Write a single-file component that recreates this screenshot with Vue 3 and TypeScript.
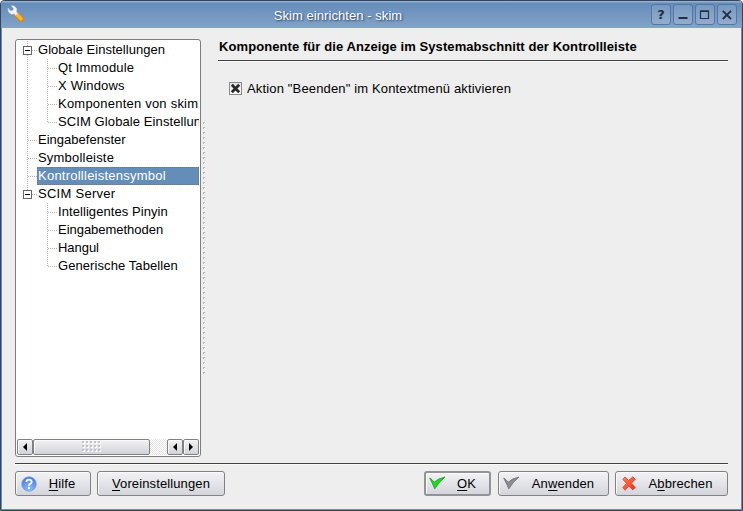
<script setup lang="ts">
import { ref } from 'vue'

interface TreeRow {
  label: string
  depth: 0 | 1
  tracking: number
  expandable?: boolean
  last?: boolean
}

const rows: TreeRow[] = [
  { label: 'Globale Einstellungen', depth: 0, tracking: 0.02, expandable: true },
  { label: 'Qt Immodule', depth: 1, tracking: 0.16 },
  { label: 'X Windows', depth: 1, tracking: 0.2 },
  { label: 'Komponenten von skim', depth: 1, tracking: 0.22 },
  { label: 'SCIM Globale Einstellungen', depth: 1, tracking: 0.1, last: true },
  { label: 'Eingabefenster', depth: 0, tracking: 0.01 },
  { label: 'Symbolleiste', depth: 0, tracking: 0.2 },
  { label: 'Kontrollleistensymbol', depth: 0, tracking: 0.24 },
  { label: 'SCIM Server', depth: 0, tracking: 0.28, expandable: true, last: true },
  { label: 'Intelligentes Pinyin', depth: 1, tracking: 0.07 },
  { label: 'Eingabemethoden', depth: 1, tracking: -0.03 },
  { label: 'Hangul', depth: 1, tracking: -0.05 },
  { label: 'Generische Tabellen', depth: 1, tracking: 0.08, last: true },
]
const lastRootIndex = 8
const selected = ref(7)
const quitEnabled = ref(true)
</script>

<template>
  <div class="window">
    <header class="titlebar">
      <svg class="app-icon" width="18" height="18" viewBox="0 0 18 18">
        <path d="M9.4 9.4 14 14.2" stroke="#d98512" stroke-width="5.4" stroke-linecap="round" />
        <path d="M9.6 9.2 14 13.8" stroke="#ffb52c" stroke-width="3.6" stroke-linecap="round" />
        <path d="M1 3.2 1.4 6.8 4.2 9.2 7.2 8.8 8.8 10.4 10.6 8.6 9.4 6.8 9.6 3.4 7 1 4.3 .8 6.6 3.4 6 5.6 3.6 6z" fill="#f4f4fc" stroke="#d4d6ec" stroke-width=".6" />
      </svg>
      <h1 class="title">Skim einrichten - skim</h1>
      <nav class="controls">
        <button class="control" aria-label="Hilfe"><span class="question">?</span></button>
        <button class="control" aria-label="Minimieren">
          <svg width="18" height="19"><path d="M4.5 13h9" stroke="#20313f" stroke-width="2" /></svg>
        </button>
        <button class="control" aria-label="Maximieren">
          <svg width="18" height="19"><path d="M4 6.5h9M4.5 6v8M12.5 6v8M4 13.5h9M4 5.8h9" fill="none" stroke="#20313f" stroke-width="1.2" /></svg>
        </button>
        <button class="control" aria-label="Schließen">
          <svg width="18" height="19"><path d="M4.8 5.8 13 14M13 5.8 4.8 14" stroke="#20313f" stroke-width="1.8" /></svg>
        </button>
      </nav>
    </header>

    <div class="content">
      <div class="main">
        <aside class="tree">
          <ul class="rows">
            <li
              v-for="(row, i) in rows"
              :key="row.label"
              class="row"
              :class="{ selected: i === selected }"
              @click="selected = i"
            >
              <svg class="guides" :width="row.depth ? 40 : 20" height="18">
                <g class="dots">
                  <path v-if="i <= lastRootIndex" :d="row.depth === 0 && i === lastRootIndex ? 'M10.5 0V9' : 'M10.5 0V18'" />
                  <path v-if="row.depth === 0" d="M11 9.5H20" />
                  <path v-if="row.depth === 1" :d="row.last ? 'M30.5 0V9' : 'M30.5 0V18'" />
                  <path v-if="row.depth === 1" d="M31 9.5H40" />
                </g>
                <g v-if="row.expandable">
                  <rect x="6.5" y="5.5" width="8" height="8" fill="#fff" stroke="#666" />
                  <path d="M8 9.5h5" stroke="#000" />
                </g>
              </svg>
              <span class="label" :style="{ letterSpacing: row.tracking + 'px' }">{{ row.label }}</span>
            </li>
          </ul>
          <div class="scrollbar">
            <button class="arrow" aria-label="Links"><svg width="14" height="14"><path d="M9 3v8L5 7z" /></svg></button>
            <div class="thumb">
              <svg width="20" height="12">
                <g v-for="y in 3" :key="y">
                  <g v-for="x in 5" :key="x">
                    <rect :x="x * 4 - 3" :y="y * 4 - 3" width="2" height="2" fill="#fff" />
                    <rect :x="x * 4 - 4" :y="y * 4 - 4" width="2" height="2" fill="#c2c2c7" />
                  </g>
                </g>
              </svg>
            </div>
            <div class="track"></div>
            <button class="arrow" aria-label="Links"><svg width="14" height="14"><path d="M9 3v8L5 7z" /></svg></button>
            <button class="arrow" aria-label="Rechts"><svg width="14" height="14"><path d="M5 3v8l4-4z" /></svg></button>
          </div>
        </aside>
        <div class="splitter"></div>
        <section class="page">
          <h2 class="heading">Komponente für die Anzeige im Systemabschnitt der Kontrollleiste</h2>
          <label class="option">
            <input v-model="quitEnabled" class="native" type="checkbox" />
            <span class="box">
              <svg v-if="quitEnabled" width="11" height="11"><path d="M1.8 1.8 9.2 9.2M9.2 1.8 1.8 9.2" stroke="#2a2a2a" stroke-width="2.8" /></svg>
            </span>
            <span class="option-label">Aktion "Beenden" im Kontextmenü aktivieren</span>
          </label>
        </section>
      </div>

      <footer class="footer">
        <button class="btn help">
          <svg class="icon" width="16" height="16">
            <defs>
              <radialGradient id="ball" cx=".5" cy=".8" r=".75">
                <stop offset="0" stop-color="#8fc0ff" />
                <stop offset="1" stop-color="#4478e8" />
              </radialGradient>
            </defs>
            <circle cx="8" cy="8" r="7.3" fill="url(#ball)" stroke="#7fa2ea" stroke-width=".7" />
            <path d="M5.4 6Q5.5 3.6 8 3.6T10.7 5.9Q10.6 7.2 9.2 7.9 8 8.5 8 9.7" fill="none" stroke="#fff" stroke-width="1.8" />
            <circle cx="8" cy="12" r="1.15" fill="#fff" />
          </svg>
          <span class="caption"><u>H</u>ilfe</span>
        </button>
        <button class="btn defaults"><span class="caption"><u>V</u>oreinstellungen</span></button>
        <span class="spacer"></span>
        <button class="btn ok">
          <svg class="icon check" width="17" height="14">
            <path d="M.7 2Q3 3.4 5.2 6.2 9 2.5 16 1 10 5.8 5.8 12.8 3 6.5 .7 2z" fill="#1ddb1d" stroke="#1a9c1a" stroke-width=".8" />
          </svg>
          <span class="caption"><u>O</u>K</span>
        </button>
        <button class="btn apply">
          <svg class="icon check" width="17" height="14">
            <path d="M.7 2Q3 3.4 5.2 6.2 9 2.5 16 1 10 5.8 5.8 12.8 3 6.5 .7 2z" fill="#8c8c91" stroke="#6c6c71" stroke-width=".8" />
          </svg>
          <span class="caption">An<u>w</u>enden</span>
        </button>
        <button class="btn cancel">
          <svg class="icon" width="14" height="15">
            <defs>
              <linearGradient id="cross" x1="0" y1="0" x2="1" y2="1">
                <stop offset="0" stop-color="#ff8a60" />
                <stop offset="1" stop-color="#f8240c" />
              </linearGradient>
            </defs>
            <path d="M.8 3.3 3.2 1 6.6 4.6 10.9.8 13.3 3.2 9.3 7.2 13.2 11.5 10.8 13.9 6.8 10 3.2 14.2 .8 11.6 4.4 7.4z" fill="url(#cross)" stroke="#e2452a" stroke-width=".9" stroke-linejoin="round" />
          </svg>
          <span class="caption">A<u>b</u>brechen</span>
        </button>
      </footer>
    </div>
  </div>
</template>

<style>
body {
  margin: 0;
  background: #fff;
}
</style>

<style scoped>
.window {
  box-sizing: border-box;
  width: 743px;
  height: 511px;
  display: flex;
  flex-direction: column;
  overflow: hidden;
  background: #eeeeee;
  border: 1px solid #34465f;
  border-radius: 4px 4px 0 0;
  box-shadow: inset 1px 0 #6f8db2, inset -1px -1px #6f8db2;
  font: 13px/18px 'Liberation Sans', Arial, sans-serif;
  letter-spacing: 0.12px;
  color: #000;
}
button {
  font: inherit;
  letter-spacing: inherit;
  color: inherit;
  padding: 0;
  margin: 0;
}
.titlebar {
  box-sizing: border-box;
  flex: none;
  display: flex;
  align-items: flex-start;
  height: 27px;
  padding: 0 5px 0 6px;
  background: linear-gradient(#93afd2 0, #93afd2 1px, #658cb9 2px, #83a3c9 100%);
}
.app-icon {
  margin-top: 4px;
  fill: none;
}
.title {
  flex: 1;
  margin: 6px 0 0;
  font-size: 13px;
  font-weight: normal;
  line-height: 18px;
  letter-spacing: 0.06px;
  text-align: center;
  color: #fff;
  text-shadow: 1px 1px 2px #263d59;
}
.controls {
  display: flex;
  gap: 2px;
  padding-top: 3px;
}
.control {
  box-sizing: border-box;
  width: 20px;
  height: 21px;
  display: flex;
  align-items: center;
  justify-content: center;
  border: 1px solid #54789f;
  border-radius: 3px;
  background: linear-gradient(#7799c2, #93acce);
}
.control svg {
  flex: none;
}
.question {
  font: bold 13px/18px 'DejaVu Sans', sans-serif;
  letter-spacing: 0;
  color: #20313f;
}
.content {
  flex: 1;
  display: flex;
  flex-direction: column;
  padding: 11px 14px 14px;
}
.main {
  display: flex;
  height: 424px;
  border-bottom: 1px solid #404040;
  box-shadow: 0 1px #fafafa;
}
.tree {
  box-sizing: border-box;
  width: 186px;
  height: 418px;
  display: flex;
  flex-direction: column;
  padding: 1px;
  border: 1px solid #7b7d80;
  border-radius: 3px;
  background: #fff;
}
.rows {
  flex: 1;
  margin: 0;
  padding: 0;
  list-style: none;
  overflow: hidden;
}
.row {
  display: flex;
  height: 18px;
  white-space: nowrap;
}
.guides {
  flex: none;
}
.dots {
  fill: none;
  stroke: #b4b4b4;
  stroke-dasharray: 1 1;
}
.label {
  flex: 1;
  min-width: 0;
  padding-left: 1px;
  overflow: hidden;
}
.selected .label {
  box-sizing: border-box;
  background: #638eb9;
  color: #fff;
  outline: 1px dotted #77777a;
  outline-offset: -1px;
}
.scrollbar {
  display: flex;
  height: 16px;
}
.arrow,
.thumb {
  box-sizing: border-box;
  height: 16px;
  display: flex;
  align-items: center;
  justify-content: center;
  border: 1px solid #808184;
  border-radius: 2px;
  background: linear-gradient(#f2f2f5, #d2d3da);
  box-shadow: inset 1px 1px #fafafa;
}
.arrow {
  width: 16px;
}
.arrow svg {
  flex: none;
}
.thumb {
  width: 117px;
}
.track {
  flex: 1;
  background: repeating-conic-gradient(#e6e6e6 0 25%, #fff 0 50%) 0 0 / 2px 2px;
}
.splitter {
  width: 3px;
  height: 253px;
  margin: 83px 12px 0 2px;
  background:
    repeating-linear-gradient(#b9b9b9 0 1px, transparent 1px 5px) 0 0 / 2px 100% no-repeat,
    repeating-linear-gradient(transparent 0 1px, #b9b9b9 1px 2px, transparent 2px 5px) 0 0 / 1px 100% no-repeat,
    repeating-linear-gradient(transparent 0 1px, #fff 1px 2px, transparent 2px 5px) 1px 0 / 1px 100% no-repeat;
}
.page {
  flex: 1;
}
.heading {
  box-sizing: border-box;
  height: 22px;
  margin: 0;
  padding-left: 1px;
  font-size: 13px;
  line-height: 16px;
  letter-spacing: 0.08px;
  border-bottom: 1px solid #404040;
  box-shadow: 0 1px #fafafa;
  white-space: nowrap;
}
.option {
  display: flex;
  align-items: center;
  height: 18px;
  margin: 19px 0 0 11px;
}
.native {
  appearance: none;
  width: 0;
  height: 0;
  margin: 0;
}
.box {
  box-sizing: border-box;
  width: 13px;
  height: 13px;
  display: flex;
  margin-bottom: 1px;
  border: 1px solid #8a8a8d;
  background: linear-gradient(#e2e2e6, #fff);
}
.option-label {
  margin-left: 5px;
  letter-spacing: 0.15px;
}
.footer {
  display: flex;
  margin-top: 7px;
}
.btn {
  box-sizing: border-box;
  height: 25px;
  display: flex;
  align-items: center;
  border: 1px solid #808184;
  border-radius: 3px;
  background: linear-gradient(#f3f3f6, #d4d5dc);
  box-shadow: inset 1px 1px #fafafb;
}
.icon {
  flex: none;
}
.check {
  margin-bottom: 1px;
}
.caption {
  flex: 1;
  text-align: center;
}
.caption u {
  text-underline-offset: 2px;
}
.help {
  width: 76px;
  padding: 0 3px 0 5px;
  margin-right: 6px;
}
.defaults {
  width: 128px;
}
.spacer {
  flex: 1;
}
.ok {
  width: 67px;
  padding: 0 2px 0 3px;
  margin-right: 7px;
  border-width: 2px;
  border-color: #929396;
}
.apply {
  width: 111px;
  padding: 0 2px 0 4px;
  margin-right: 6px;
}
.cancel {
  width: 113px;
  padding: 0 2px 0 6px;
}
</style>
